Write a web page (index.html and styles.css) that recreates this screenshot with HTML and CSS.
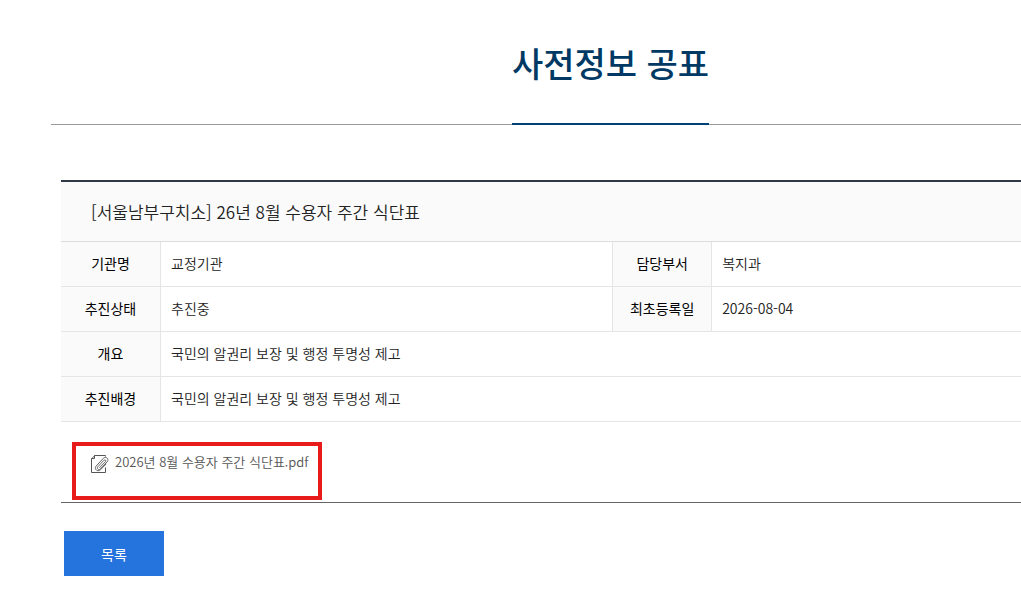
FILE: index.html
```html
<!DOCTYPE html>
<html lang="ko">
<head>
  <meta charset="UTF-8" />
  <meta name="viewport" content="width=device-width, initial-scale=1.0"/>
  <title>사전정보 공표</title>
  <link rel="stylesheet" href="styles.css">
</head>

<body>
  <div class="container">
    <header class="page-header">
      <h1 class="page-title">사전정보 공표</h1>
    </header>

    <main class="content">
      <h2 class="view-title">[서울남부구치소] 26년 8월 수용자 주간 식단표</h2>

      <table class="view-table">
        <colgroup>
          <col class="col-label">
          <col class="col-wide">
          <col class="col-label">
          <col>
        </colgroup>
        <tbody>
          <tr>
            <th scope="row">기관명</th>
            <td>교정기관</td>
            <th scope="row" class="th-mid">담당부서</th>
            <td>복지과</td>
          </tr>
          <tr>
            <th scope="row">추진상태</th>
            <td>추진중</td>
            <th scope="row" class="th-mid">최초등록일</th>
            <td>2026-08-04</td>
          </tr>
          <tr>
            <th scope="row">개요</th>
            <td colspan="3">국민의 알권리 보장 및 행정 투명성 제고</td>
          </tr>
          <tr>
            <th scope="row">추진배경</th>
            <td colspan="3">국민의 알권리 보장 및 행정 투명성 제고</td>
          </tr>
        </tbody>
      </table>

      <!-- 첨부파일 -->
      <div class="file-area">
        <div class="file-box">
          <a class="file-link" href="#">
            <svg class="file-icon" viewBox="0 0 18 19" fill="none" stroke="#555" aria-hidden="true">
              <path d="M14.500 1.500V.5H3.500L.5 3.500V17.500H14.500V12.500"/>
              <path d="M.5 3.500H3.500V.5" fill="#ccd3dc"/>
              <g stroke-width=".9" stroke-linecap="round">
                <path d="M14.800 9.200L9.600 14.700C6.700 17.600 2.600 14 5.200 11L12.400 3.200C14.700 .9 18.600 3.900 16.200 6.800L9.300 14C7.700 15.500 5.200 13.600 6.900 11.700L12.900 5.300C14 4.200 15.500 5.500 14.400 6.700L8.700 12.500"/>
              </g>
            </svg>
            <span>2026년 8월 수용자 주간 식단표.pdf</span>
          </a>
        </div>
      </div>

      <div class="btn-area">
        <button type="button" class="btn">목록</button>
      </div>
    </main>
  </div>
</body>
</html>
```
FILE: styles.css
```css
* {
  box-sizing: border-box;
}

body {
  margin: 0;
  padding-left: 51px;
  font-family: "Noto Sans CJK KR", "Noto Sans", sans-serif;
  font-size: 14px;
  color: #222;
  background: #fff;
}

.page-header {
  display: flex;
  justify-content: center;
  height: 125px;
  padding-left: 149px;
  border-bottom: 1px solid #999;
}

.page-title {
  height: 125px;
  margin: 0;
  padding-top: 38px;
  border-bottom: 2px solid #004178;
  color: #003964;
  font-size: 34px;
  font-weight: 500;
  line-height: 50px;
}

.content {
  padding: 55px 0 14px 10px;
}

.view-title {
  margin: 0;
  padding: 15px 30px 14px;
  border-top: 2px solid #2e3848;
  border-bottom: 1px solid #ddd;
  background: #fafafa;
  font-size: 17px;
  font-weight: 350;
  line-height: 30px;
}

.view-table {
  width: 100%;
  border-collapse: separate;
  border-spacing: 0;
  table-layout: fixed;
}

.col-label {
  width: 100px;
}

.col-wide {
  width: 47%;
}

.view-table th,
.view-table td {
  height: 45px;
  padding: 0 10px 2px;
  border-bottom: 1px solid #e5e5e5;
  font-weight: 350;
  text-align: left;
}

.view-table th {
  padding: 0 0 2px;
  border-right: 1px solid #e5e5e5;
  background: #fafafa;
  color: #000;
  font-weight: 400;
  text-align: center;
}

.view-table .th-mid {
  border-left: 1px solid #e5e5e5;
}

/* 첨부파일 */
.file-area {
  padding: 20px 11px 2px;
  border-bottom: 1px solid #666;
}

.file-box {
  width: fit-content;
  height: 58px;
  padding: 7px 10px 0 15px;
  border: 4px solid #e81b1b;
}

.file-link {
  display: flex;
  gap: 6px;
  color: #555;
  font-size: 13px;
  font-weight: 350;
  line-height: 18px;
  text-decoration: none;
}

.file-icon {
  width: 18px;
  height: 19px;
  margin-top: 2px;
}

.btn-area {
  padding: 28px 3px 0;
}

.btn {
  display: block;
  width: 100px;
  height: 45px;
  padding: 0;
  border: 0;
  background: #2573dc;
  color: #fff;
  font-family: inherit;
  font-size: 14px;
  cursor: pointer;
}
```
